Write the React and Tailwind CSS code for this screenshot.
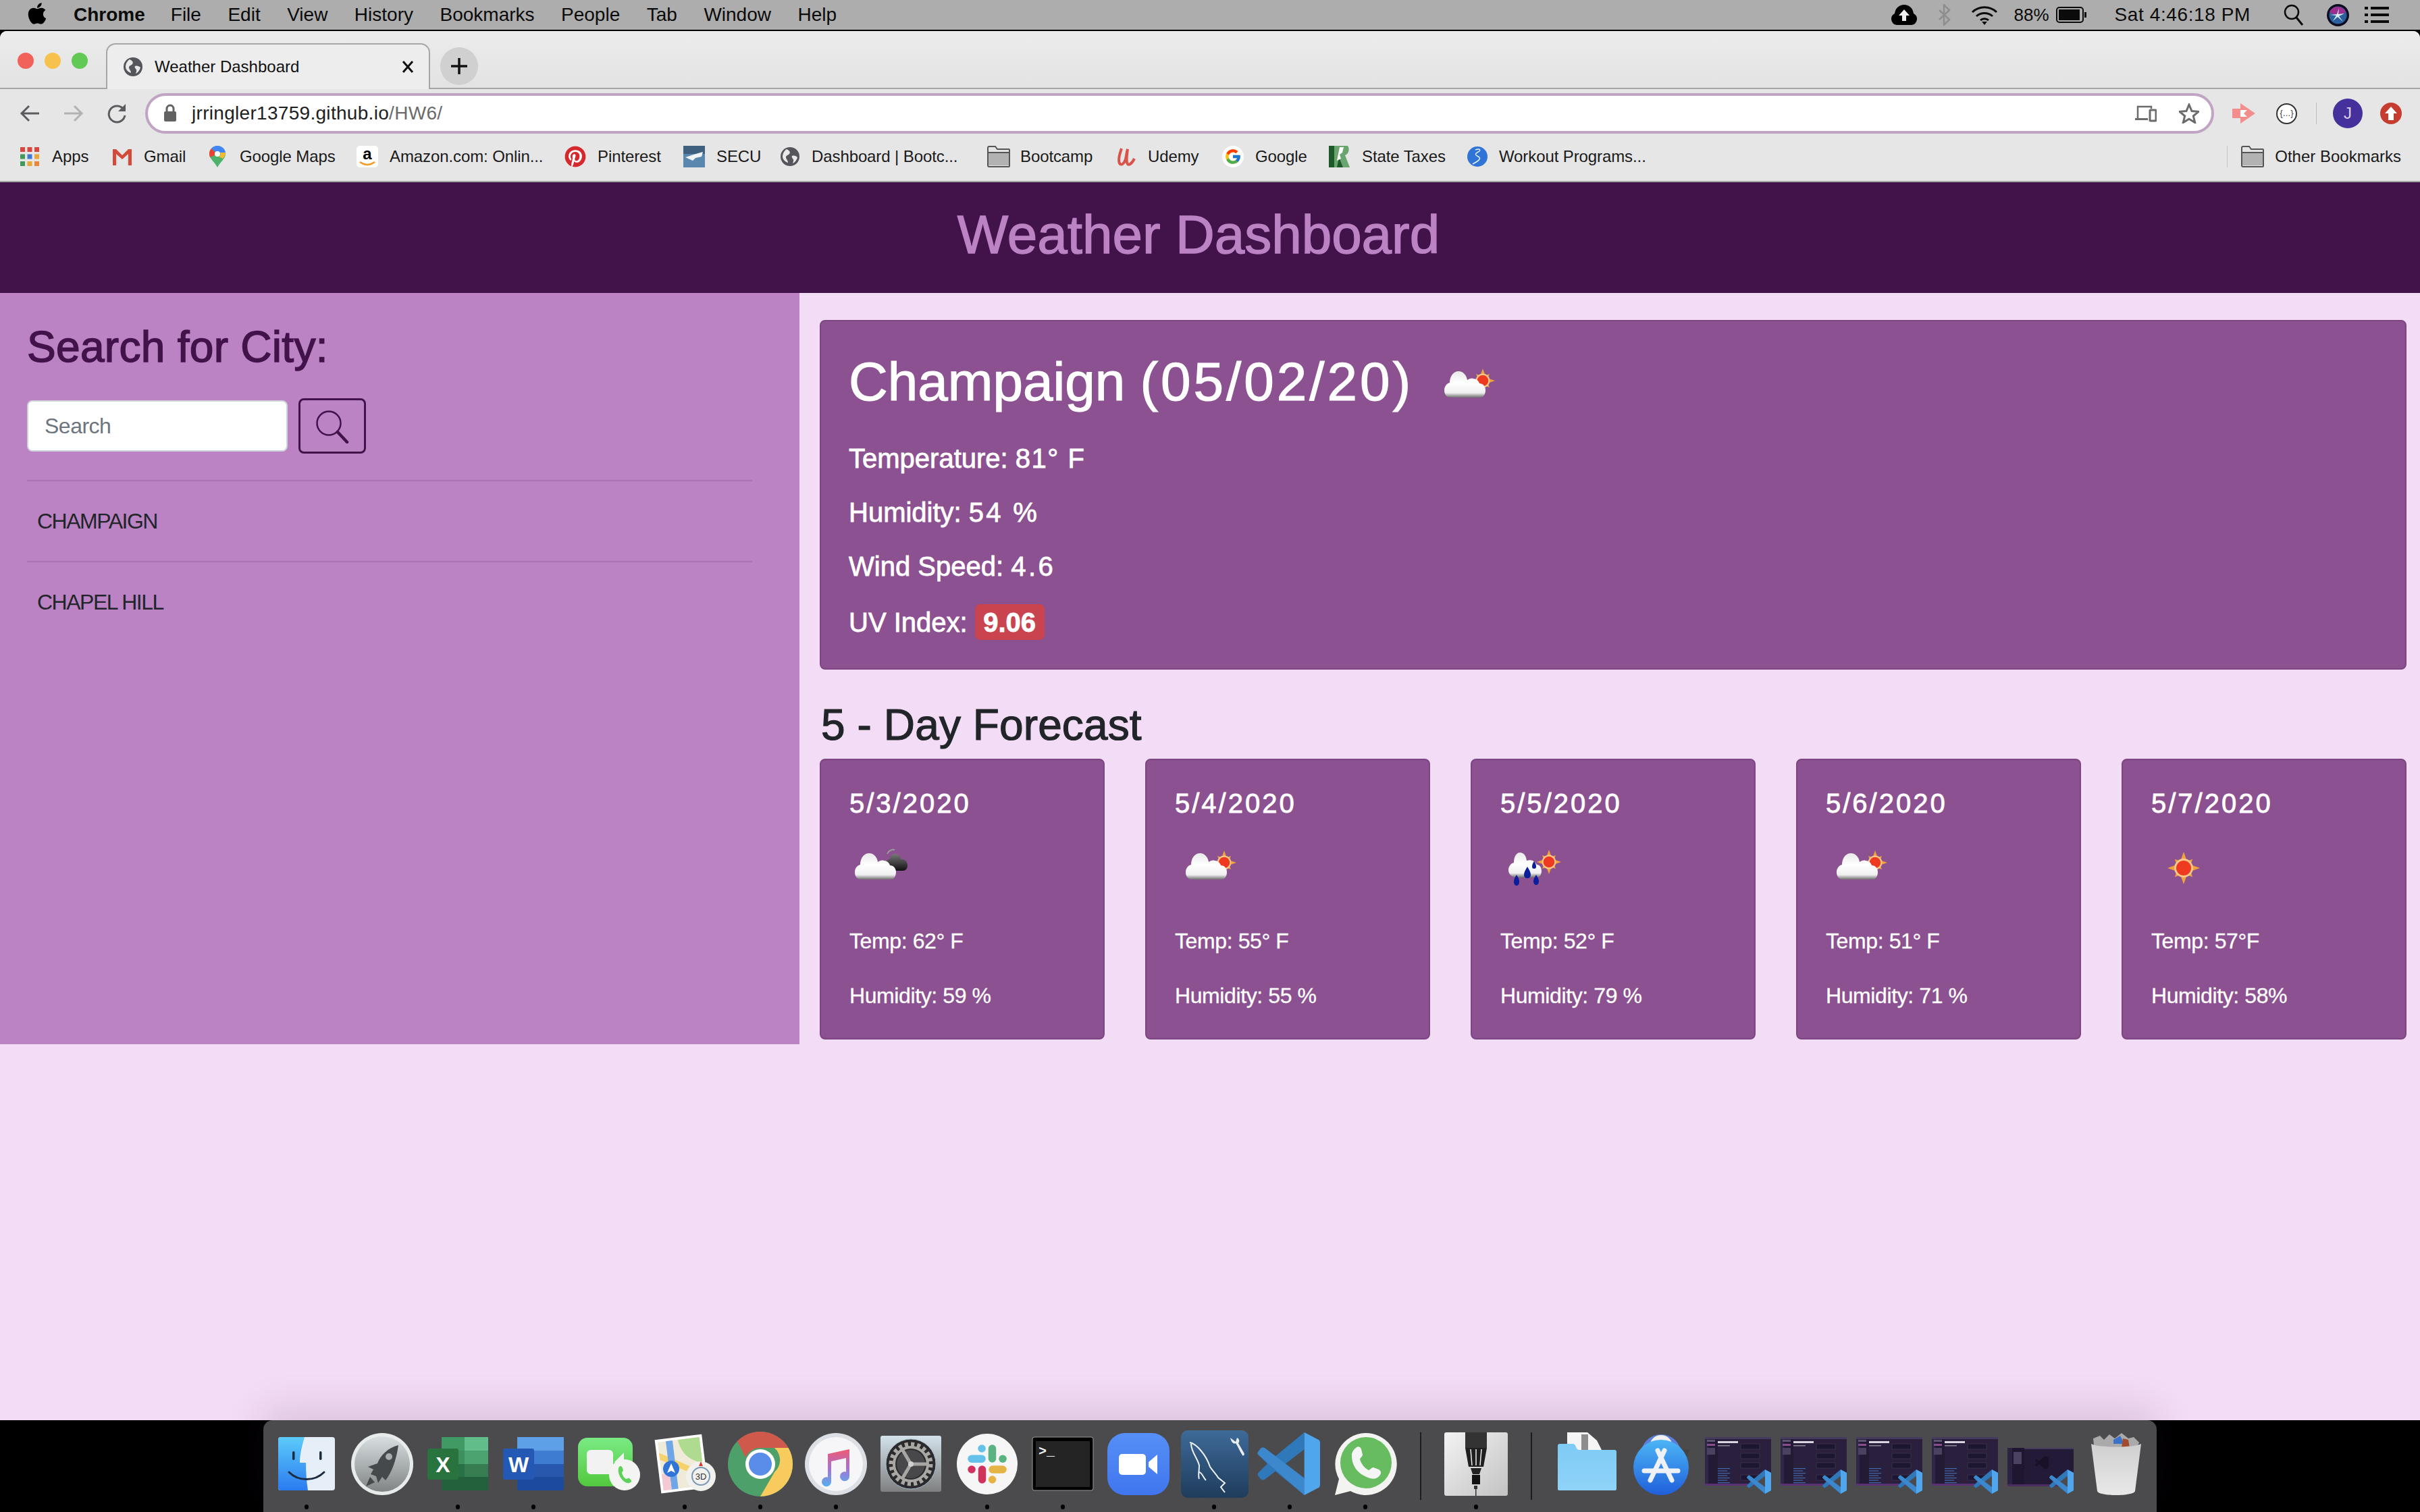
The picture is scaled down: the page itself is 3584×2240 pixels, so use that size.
import React from "react";
import { FaApple, FaPinterest } from "react-icons/fa";
import { FcGoogle } from "react-icons/fc";

const MENU = ["File", "Edit", "View", "History", "Bookmarks", "People", "Tab", "Window", "Help"];

function Globe({ size = 28 }) {
  return (
    <svg width={size} height={size} viewBox="0 0 28 28" className="shrink-0">
      <circle cx="14" cy="14" r="14" fill="#55565c" />
      <path d="M9 3c4 2 6 4 4 7-2 2-5 2-5 5 0 3 3 4 3 8-4-1-8-5-8-9 0-5 3-9 6-11z" fill="#e9e9e9" />
      <path d="M17 13c3-1 6 0 8 2-1 4-4 8-7 9 1-3 2-5 0-7-1-1-2-3-1-4z" fill="#e9e9e9" />
    </svg>
  );
}

function FolderIcon() {
  return (
    <svg width="34" height="32" viewBox="0 0 34 32" className="shrink-0">
      <path d="M1 3a2 2 0 0 1 2-2h9l3 4h17a1 1 0 0 1 1 1v24a1 1 0 0 1-1 1H3a2 2 0 0 1-2-2z" fill="#e4e4e4" stroke="#555" strokeWidth="2" />
      <rect x="2" y="10" width="30" height="19" fill="#b2b2b2" />
      <rect x="2" y="9" width="30" height="2" fill="#555" />
    </svg>
  );
}

function Bm({ icon, label, w, gap }) {
  return (
    <div className={`flex items-center shrink-0 ${gap || "gap-[17px]"}`} style={{ width: w }}>
      {icon}
      <span className="text-[24px] text-[#1a1a1a] whitespace-nowrap tracking-[-0.1px]">{label}</span>
    </div>
  );
}

function Cloud() {
  return (
    <path d="M18 73c-7 0-10-5-10-11 0-6 4-10 8-11 0-10 6-17 13-17 7 0 12 6 13 13 3-2 6-3 9-2 4 0 8 3 9 7 5 0 9 4 9 10 0 6-3 11-8 11z" fill="url(#wxCloud)" />
  );
}

function Sun({ cx, cy, r }) {
  const rays = [];
  for (let i = 0; i < 8; i++) {
    const a = (i * Math.PI) / 4;
    const big = i % 2 === 0 ? 1 : 0.78;
    const R = r * big;
    const t = r * 0.35;
    const x = cx + Math.sin(a) * R;
    const y = cy - Math.cos(a) * R;
    const x1 = cx + Math.cos(a) * t;
    const y1 = cy + Math.sin(a) * t;
    const x2 = cx - Math.cos(a) * t;
    const y2 = cy - Math.sin(a) * t;
    rays.push(<polygon key={i} points={`${x},${y} ${x1},${y1} ${x2},${y2}`} fill="#f2a33a" />);
  }
  return (
    <g>
      {rays}
      <circle cx={cx} cy={cy} r={r * 0.58} fill="#f7c98a" />
      <circle cx={cx} cy={cy} r={r * 0.46} fill="#ee3a20" />
    </g>
  );
}

function Wx({ type, size = 100 }) {
  return (
    <svg width={size} height={size} viewBox="0 0 100 100" className="shrink-0">
      <defs>
        <linearGradient id="wxCloud" x1="0" y1="0" x2="0" y2="1">
          <stop offset="0" stopColor="#e9e9e9" />
          <stop offset="0.45" stopColor="#ffffff" />
          <stop offset="0.82" stopColor="#f0f0f0" />
          <stop offset="1" stopColor="#6f6f6f" />
        </linearGradient>
        <linearGradient id="wxDark" x1="0" y1="0" x2="0" y2="1">
          <stop offset="0" stopColor="#777" />
          <stop offset="1" stopColor="#111" />
        </linearGradient>
      </defs>
      {type === "sun" && <Sun cx={48} cy={56} r={24} />}
      {type === "cs" && (
        <g>
          <Sun cx={73} cy={48} r={18} />
          <g transform="translate(8 0)">
            <Cloud />
          </g>
        </g>
      )}
      {type === "dark" && (
        <g>
          <path d="M56 35c2-5 7-7 11-6" fill="none" stroke="#9a9a9a" strokeWidth="2" />
          <path d="M62 60c-6 0-9-4-8-9 0-5 3-8 6-9 1-5 5-8 9-7 4 1 7 4 7 8 5-1 10 3 10 9 0 5-3 8-7 8z" fill="url(#wxDark)" />
          <Cloud />
        </g>
      )}
      {type === "rain" && (
        <g>
          <Sun cx={72} cy={47} r={18} />
          <path d="M24 70c-7 0-12-5-12-11 0-6 4-10 8-11 0-9 4-15 9-15 6 0 9 5 10 12 3-1 6-1 9 0 3 2 5 4 6 6 4 0 7 4 7 9 0 6-3 10-7 10z" fill="url(#wxCloud)" />
          <path d="M40 54c3 5 5 8 5 12 0 3-2 5-5 5s-5-2-5-5c0-4 2-7 5-12z" fill="#0a1d9a" />
          <path d="M24 66c3 5 4 7 4 11 0 3-2 5-4 5s-4-2-4-5c0-4 1-6 4-11z" fill="#0a1d9a" />
          <path d="M53 66c3 5 4 7 4 10 0 3-2 5-4 5s-4-2-4-5c0-3 1-5 4-10z" fill="#0a1d9a" />
          <path d="M50 46c2 3 3 5 3 8 0 2-1 3-3 3s-3-1-3-3c0-3 1-5 3-8z" fill="#0a1d9a" />
        </g>
      )}
    </svg>
  );
}

function ForecastCard({ date, type, temp, hum }) {
  return (
    <div className="w-[422px] h-[416px] shrink-0 rounded-[8px] border-2 border-[#7d4682] bg-[#8c5190] px-[42px] pt-[40px] text-white">
      <h5 className="text-[40px] leading-[48px] mb-[16px] tracking-[3px] [-webkit-text-stroke:0.8px_#ffffff]">{date}</h5>
      <Wx type={type} />
      <p className="mt-[40px] text-[32px] leading-[48px] mb-[33px] tracking-[-0.4px] [-webkit-text-stroke:0.3px_#ffffff]">{temp}</p>
      <p className="text-[32px] leading-[48px] tracking-[-0.4px] [-webkit-text-stroke:0.3px_#ffffff]">{hum}</p>
    </div>
  );
}

const VSLeft = "M75 0 29 38 12 25c-2-1-4-1-6 0l-4 5c-2 2-2 4 0 6l14 14L2 64c-2 2-2 4 0 6l4 5c2 1 4 1 6 0l17-13 46 38z";

function VSCode({ x = 0, y = 0, s = 1 }) {
  return (
    <g transform={`translate(${x} ${y}) scale(${s})`}>
      <path d={VSLeft} fill="#2f78b9" />
      <path d="M75 27 45 50l30 23z" fill="#4a4b4e" />
      <path d="M12 25c-2-1-4-1-6 0l-4 5c-2 2-2 4 0 6l73 64V73z" fill="#3d88cd" />
      <path d="M75 0l21 11c3 1 4 3 4 6v66c0 3-1 5-4 6l-21 11z" fill="#50a6ec" />
    </g>
  );
}

function Thumb({ blank }) {
  const lines = [];
  if (!blank) {
    for (let i = 0; i < 7; i++) {
      lines.push(<rect key={`a${i}`} x="26" y={62 + i * 3.5} width={i % 2 ? 14 : 18} height="1.2" fill="#3f69a8" />);
      lines.push(<rect key={`b${i}`} x="26" y={90 + i * 3} width={i % 2 ? 10 : 15} height="1.2" fill="#3f69a8" />);
    }
    [26, 40, 54, 72, 86].forEach((y) => lines.push(<rect key={y} x="60" y={y} width="28" height="8" fill="#1d1630" stroke="#4e4661" strokeWidth=".5" />));
    lines.push(<rect key="t" x="26" y="22" width="30" height="3" fill="#d9d5e2" />);
    lines.push(<rect key="t2" x="26" y="28" width="18" height="1.5" fill="#8b8599" />);
    lines.push(<rect key="c" x="10" y="20" width="12" height="3" fill="#5f5577" />);
    lines.push(<rect key="c2" x="10" y="26" width="12" height="3" fill="#834f8c" />);
    lines.push(<rect key="c3" x="10" y="32" width="12" height="10" fill="#4a4260" />);
  }
  return (
    <svg width="112" height="112" viewBox="0 0 112 112" className="-my-[8px]">
      {blank ? (
        <g>
          <rect x="7" y="32" width="98" height="56" fill="#231a37" />
          <rect x="7" y="32" width="98" height="2" fill="#453c5d" />
          <rect x="7" y="32" width="7" height="56" fill="#2c2242" />
          <rect x="14" y="32" width="18" height="56" fill="#1f1731" />
          <rect x="16" y="38" width="12" height="18" fill="#4a4260" />
          <g transform="translate(48 44) scale(.2)" opacity=".55"><path d={VSLeft} fill="#100b1c" /><path d="M75 0l21 11c3 1 4 3 4 6v66c0 3-1 5-4 6l-21 11z" fill="#100b1c" /></g>
          <rect x="7" y="86" width="98" height="3" fill="#4e2d63" />
          <VSCode x={69} y={64} s={0.36} />
        </g>
      ) : (
        <g>
          <clipPath id="thumbClip"><rect x="7" y="16" width="98" height="72" /></clipPath>
          <rect x="7" y="16" width="98" height="72" fill="#2a1f3d" />
          <rect x="7" y="16" width="98" height="3" fill="#453c5d" />
          <rect x="7" y="19" width="5" height="69" fill="#31264a" />
          <rect x="12" y="19" width="14" height="69" fill="#231a35" />
          <g clipPath="url(#thumbClip)">{lines}</g>
          <rect x="7" y="85" width="98" height="3" fill="#5a3175" />
          <VSCode x={69} y={64} s={0.36} />
        </g>
      )}
    </svg>
  );
}

function I({ children }) {
  return (
    <svg width="96" height="96" viewBox="0 0 96 96" className="overflow-visible">
      {children}
    </svg>
  );
}

const dockIcons = {
  finder: (
    <I>
      <rect x="6" y="8" width="84" height="79" rx="4" fill="#e6eff8" />
      <path d="M10 8h35c-4 14-7 26-7 38h9c0 14 1 28 3 41H10a4 4 0 0 1-4-4V12a4 4 0 0 1 4-4z" fill="url(#fb)" />
      <defs>
        <linearGradient id="fb" x1="0" y1="0" x2="0" y2="1"><stop offset="0" stopColor="#5ccbfa" /><stop offset="1" stopColor="#2b7bf0" /></linearGradient>
      </defs>
      <rect x="27" y="29" width="3.5" height="13" rx="1.7" fill="#1c2b3d" />
      <rect x="67" y="29" width="3.5" height="13" rx="1.7" fill="#1c2b3d" />
      <path d="M22 60c14 14 38 14 52 0" fill="none" stroke="#1c2b3d" strokeWidth="3" strokeLinecap="round" />
    </I>
  ),
  rocket: (
    <I>
      <defs>
        <linearGradient id="rk" x1="0" y1="0" x2="0" y2="1"><stop offset="0" stopColor="#d8dfe0" /><stop offset="1" stopColor="#808485" /></linearGradient>
      </defs>
      <circle cx="48" cy="48" r="46" fill="#e7eceb" />
      <circle cx="48" cy="48" r="41" fill="url(#rk)" />
      <path d="M72 20c-15 4-26 14-31 27l-14 5 8 4-4 7 8 3 3 10 6-9 5 5c9-11 16-30 19-52z" fill="#46494b" />
      <path d="M30 67l-6 14 13-6z" fill="#46494b" />
      <circle cx="58" cy="37" r="5" fill="#a9adad" />
    </I>
  ),
  excel: (
    <I>
      <rect x="24" y="8" width="69" height="79" rx="3" fill="#2d7b4d" />
      <rect x="24" y="8" width="34" height="20" fill="#3f9a63" />
      <rect x="58" y="8" width="35" height="20" fill="#61bd8a" />
      <rect x="24" y="28" width="34" height="20" fill="#3d8f5d" />
      <rect x="58" y="28" width="35" height="20" fill="#4da36f" />
      <rect x="24" y="48" width="34" height="19" fill="#2a7046" />
      <rect x="58" y="48" width="35" height="19" fill="#367d51" />
      <rect x="24" y="67" width="69" height="20" fill="#23613c" />
      <rect x="3" y="25" width="46" height="46" rx="3" fill="#29733f" />
      <text x="26" y="60" textAnchor="middle" fontSize="32" fontWeight="700" fill="#fff">X</text>
    </I>
  ),
  word: (
    <I>
      <rect x="24" y="8" width="69" height="79" rx="3" fill="#1c4a9c" />
      <rect x="24" y="8" width="69" height="20" fill="#5ea0e8" />
      <rect x="24" y="28" width="69" height="20" fill="#3d7cd0" />
      <rect x="24" y="48" width="69" height="19" fill="#2858ae" />
      <rect x="3" y="25" width="46" height="46" rx="3" fill="#2358b5" />
      <text x="26" y="60" textAnchor="middle" fontSize="32" fontWeight="700" fill="#fff">W</text>
    </I>
  ),
  facetime: (
    <I>
      <defs>
        <linearGradient id="ft" x1="0" y1="0" x2="0" y2="1"><stop offset="0" stopColor="#7aea84" /><stop offset="1" stopColor="#52c93e" /></linearGradient>
      </defs>
      <rect x="2" y="9" width="81" height="72" rx="14" fill="url(#ft)" />
      <rect x="15" y="27" width="39" height="36" rx="6" fill="#f2f2f2" />
      <path d="M56 45l14-14v30z" fill="#f2f2f2" />
      <circle cx="71" cy="64" r="23" fill="#f4f5f2" />
      <path d="M63 52c2-2 4-1 5 2l1 3c0 2-2 2-2 4 1 4 3 7 6 9 2 0 3-2 5-1l2 2c2 2 1 4-2 5-4 1-9-2-13-8-4-7-4-13-2-16z" fill="#5ed15a" />
    </I>
  ),
  maps: (
    <I>
      <g transform="rotate(-7 40 46)">
        <rect x="8" y="8" width="70" height="80" fill="#fff" />
        <rect x="12" y="12" width="62" height="72" fill="#f0ead8" />
        <path d="M42 12h32v38c-16-4-30-16-32-38z" fill="#aedb8f" />
        <path d="M12 38l62 36v-10l-62-36z" fill="#f6d26c" />
        <rect x="24" y="12" width="10" height="72" fill="#6ea6e8" />
        <path d="M12 60h12v24H12z" fill="#f5c9d4" />
      </g>
      <circle cx="28" cy="55" r="12" fill="#2f74d6" />
      <path d="M28 47l6 14-6-3-6 3z" fill="#fff" />
      <circle cx="72" cy="66" r="22" fill="#f1f1ee" />
      <circle cx="72" cy="66" r="13" fill="none" stroke="#7b97b4" strokeWidth="2" />
      <text x="72" y="71" textAnchor="middle" fontSize="13" fill="#333">3D</text>
      <path d="M72 44l3 7h-6z" fill="#d6372c" />
    </I>
  ),
  chrome: (
    <I>
      <circle cx="48" cy="48" r="48" fill="#4da06a" />
      <path d="M48 0a48 48 0 0 1 41.6 24H48a24 24 0 0 0-22 14L14 14A48 48 0 0 1 48 0z" fill="#cf5a4b" />
      <path d="M89.6 24A48 48 0 0 1 48 96l21-36a24 24 0 0 0 0-36z" fill="#f8cb5e" />
      <circle cx="48" cy="48" r="22" fill="#fff" />
      <circle cx="48" cy="48" r="17" fill="#5a8cea" />
    </I>
  ),
  itunes: (
    <I>
      <defs>
        <linearGradient id="it" x1="0" y1="0" x2="0" y2="1"><stop offset="0" stopColor="#f0596e" /><stop offset="0.5" stopColor="#a971d0" /><stop offset="1" stopColor="#54b0ef" /></linearGradient>
      </defs>
      <circle cx="48" cy="48" r="46" fill="#dcdfe4" />
      <circle cx="48" cy="48" r="40" fill="#f6f6f8" />
      <path d="M36 33l32-7v40a7 7 0 1 1-5-6.500V39l-22 5v30a7 7 0 1 1-5-6.500z" fill="url(#it)" />
    </I>
  ),
  prefs: (
    <I>
      <defs>
        <linearGradient id="pr" x1="0" y1="0" x2="0" y2="1"><stop offset="0" stopColor="#d3e2ea" /><stop offset="1" stopColor="#7f8080" /></linearGradient>
      </defs>
      <rect x="2" y="6" width="90" height="83" rx="3" fill="url(#pr)" />
      <circle cx="47" cy="48" r="37" fill="#2b2b2d" stroke="#a6bccb" strokeWidth="1" />
      <circle cx="47" cy="48" r="29" fill="none" stroke="#a9a7a4" strokeWidth="7" strokeDasharray="5 4.100" />
      <circle cx="47" cy="48" r="25" fill="none" stroke="#a9a7a4" strokeWidth="4" />
      <circle cx="47" cy="48" r="21" fill="#48484a" />
      <g stroke="#a9a7a4" strokeWidth="5"><path d="M47 48 34 26" /><path d="M47 48h24" /><path d="M47 48 34 70" /></g>
      <circle cx="47" cy="48" r="4" fill="#d0d0d0" />
    </I>
  ),
  slack: (
    <I>
      <circle cx="48" cy="48" r="45" fill="#f6f6f6" />
      <g strokeLinecap="round" strokeWidth="11.500" fill="none">
        <path d="M40 25h.1" stroke="#63c1ea" />
        <path d="M25 40.300h15" stroke="#63c1ea" />
        <path d="M55.500 25v15" stroke="#5bb381" />
        <path d="M71 40.300h.1" stroke="#5bb381" />
        <path d="M56 56h15" stroke="#e6b345" />
        <path d="M55.500 71h.1" stroke="#e6b345" />
        <path d="M40.500 56v15" stroke="#d0325e" />
        <path d="M25 56h.1" stroke="#d0325e" />
      </g>
    </I>
  ),
  terminal: (
    <I>
      <rect x="3" y="8" width="90" height="79" rx="3" fill="#000" stroke="#9a9a9a" strokeWidth="1" />
      <rect x="8" y="14" width="80" height="68" fill="#242424" />
      <text x="12" y="35" fontSize="20" fontWeight="700" fill="#f2f2f2" fontFamily="'Liberation Mono', monospace">&gt;_</text>
    </I>
  ),
  zoom: (
    <I>
      <defs>
        <linearGradient id="zm" x1="0" y1="0" x2="0" y2="1"><stop offset="0" stopColor="#568ff6" /><stop offset="1" stopColor="#3f76ef" /></linearGradient>
      </defs>
      <rect x="2" y="2" width="92" height="92" rx="26" fill="url(#zm)" />
      <rect x="19" y="33" width="40" height="31" rx="5" fill="#fff" />
      <path d="M63 45l13-11v29L63 52z" fill="#fff" />
    </I>
  ),
  mysql: (
    <I>
      <defs>
        <linearGradient id="my" x1="0" y1="0" x2="0" y2="1"><stop offset="0" stopColor="#3e6a98" /><stop offset="1" stopColor="#1f3c5c" /></linearGradient>
      </defs>
      <rect x="-1" y="-2" width="100" height="100" rx="10" fill="url(#my)" />
      <path d="M12 16c10 2 24 18 30 36 4 6 10 12 12 16l10 8-6 6 6 8M14 18c0 12 10 22 12 32 0 10-2 16 0 20M26 60c4 0 6 8 10 12" fill="none" stroke="#eef3f7" strokeWidth="2" />
      <path d="M72 9c2 8 6 10 8 8 4 6 6 12 10 18 2 2 4-2 2-4l-8-14c2-2 2-6-2-8l-2 6z" fill="#e8edf2" />
    </I>
  ),
  vscode: (
    <I>
      <VSCode x={0} y={1} s={0.93} />
    </I>
  ),
  whatsapp: (
    <I>
      <path d="M48 2a46 46 0 1 1-22 86L3 94l6-24A46 46 0 0 1 48 2z" fill="#f3f3f1" />
      <circle cx="49" cy="46" r="38" fill="#66bc5f" />
      <path d="M34 24c3-3 7-2 8 2l2 8c0 3-3 4-4 7 2 7 7 13 13 16 3-1 4-4 7-4l8 3c3 2 4 5 2 8-3 5-9 7-15 5-17-5-28-18-27-36 1-4 3-7 6-9z" fill="#f5f5f5" />
    </I>
  ),
  pencil: (
    <I>
      <defs>
        <linearGradient id="pc" x1="0" y1="0" x2="1" y2="1"><stop offset="0" stopColor="#f3f3f3" /><stop offset="1" stopColor="#c2c2c2" /></linearGradient>
      </defs>
      <rect x="1" y="1" width="94" height="94" rx="3" fill="url(#pc)" />
      <rect x="32" y="1" width="32" height="23" fill="#333" />
      <path d="M32 24h32l-5 28H37z" fill="#1f1f1f" />
      <g stroke="#eee" strokeWidth="1.5"><path d="M40 26l2 24M48 26v24M56 26l-2 24" /></g>
      <path d="M40 54h16l-3 9h-10z" fill="#222" />
      <rect x="42" y="64" width="12" height="14" fill="#111" />
      <rect x="45" y="80" width="5" height="5" fill="#333" />
      <rect x="47" y="85" width="1.500" height="10" fill="#333" />
    </I>
  ),
  folder: (
    <I>
      <path d="M19 1h30l14 12 11 22H19z" fill="#f5f5f5" />
      <rect x="40" y="4" width="10" height="30" fill="#8d8d8d" />
      <defs>
        <linearGradient id="fd" x1="0" y1="0" x2="0" y2="1"><stop offset="0" stopColor="#7ecbf4" /><stop offset="1" stopColor="#8fd3f8" /></linearGradient>
      </defs>
      <path d="M5 21a3 3 0 0 1 3-3h20c4 0 4 9 8 9h53a3 3 0 0 1 3 3v55a2 2 0 0 1-2 2H7a2 2 0 0 1-2-2z" fill="url(#fd)" />
    </I>
  ),
  appstore: (
    <I>
      <defs>
        <linearGradient id="as" x1="0" y1="0" x2="0" y2="1"><stop offset="0" stopColor="#4cb5f6" /><stop offset="1" stopColor="#1f5fdb" /></linearGradient>
      </defs>
      <circle cx="46" cy="34" r="30" fill="#5a7edc" />
      <circle cx="46" cy="22" r="17" fill="#f0f0f0" />
      <rect x="78" y="26" width="8" height="12" fill="#444" transform="rotate(20 82 32)" />
      <circle cx="46" cy="53" r="41" fill="url(#as)" />
      <g stroke="#eef1f6" strokeWidth="7" strokeLinecap="round"><path d="M51 28 30 72" /><path d="M41 28l21 44" /><path d="M21 58h50" /></g>
    </I>
  ),
  trash: (
    <I>
      <defs>
        <linearGradient id="tr" x1="0" y1="0" x2="0" y2="1"><stop offset="0" stopColor="#cfcfcf" /><stop offset="1" stopColor="#e9e9e9" /></linearGradient>
      </defs>
      <path d="M14 10l10-4 6 6 8-8 8 6 10-8 10 8 8-2 8 8-6 14H16z" fill="#aaaaaa" />
      <path d="M44 12l10-6 6 12H44z" fill="#3a72c8" />
      <path d="M58 10l8 2 2 12H56z" fill="#a44a2e" />
      <path d="M11 18c10 6 64 6 74 0l-9 70c-2 8-54 8-56 0z" fill="url(#tr)" />
    </I>
  ),
};

function DockItem({ icon, dot, children }) {
  return (
    <div className="w-[112px] shrink-0 flex flex-col items-center pt-[17px]">
      <div className="h-[96px] flex items-center justify-center">{children || dockIcons[icon]}</div>
      {dot ? <div className="mt-[12px] w-[6px] h-[7px] rounded-full bg-black" /> : null}
    </div>
  );
}

function DockSep() {
  return <div className="w-[2px] h-[100px] mt-[18px] mx-[25px] bg-[#1d1d1d] shrink-0" />;
}

export default function App() {
  return (
    <div className="w-[3584px] h-[2240px] flex flex-col overflow-hidden bg-black [font-family:'Liberation_Sans',Arial,sans-serif]">
      {/* macOS menu bar */}
      <div className="h-[46px] shrink-0 border-b-2 border-black bg-[#adadad] flex items-center text-[28px] text-[#0b0b0b]">
        <FaApple className="ml-[38px] w-[34px] h-[36px] text-black shrink-0 -mt-[4px]" />
        <span className="ml-[37px] font-bold">Chrome</span>
        <div className="ml-[38px] flex gap-[39.5px]">
          {MENU.map((m) => (
            <span key={m}>{m}</span>
          ))}
        </div>
        <div className="ml-auto flex items-center">
          <svg width="40" height="30" viewBox="0 0 40 30">
            <path d="M9 30a9 9 0 0 1-3-17C7 5 13 0 20 0c7 0 13 5 14 13a9 9 0 0 1-3 17z" fill="#000" />
            <path d="M20 7l8 9h-5v8h-6v-8h-5z" fill="#eee" />
          </svg>
          <svg width="19" height="32" viewBox="0 0 19 32" className="ml-[30px]">
            <path d="M2 9l15 14-8 8V1l8 8L2 23" fill="none" stroke="#8e8e8e" strokeWidth="2.5" />
          </svg>
          <svg width="40" height="30" viewBox="0 0 40 30" className="ml-[30px]">
            <g fill="none" stroke="#0b0b0b" strokeWidth="3">
              <path d="M2 11a26 26 0 0 1 36 0" />
              <path d="M8 17a18 18 0 0 1 24 0" />
              <path d="M14 23a9 9 0 0 1 12 0" />
            </g>
            <path d="M20 30l-4-5h8z" fill="#0b0b0b" />
          </svg>
          <span className="ml-[24px] text-[26px]">88%</span>
          <svg width="45" height="24" viewBox="0 0 45 24" className="ml-[10px]">
            <rect x="1" y="1" width="39" height="22" rx="4" fill="none" stroke="#0b0b0b" strokeWidth="2" />
            <rect x="4" y="4" width="31" height="16" fill="#0b0b0b" />
            <rect x="42" y="8" width="3" height="8" fill="#0b0b0b" />
          </svg>
          <span className="ml-[42px] tracking-[0.6px]">Sat 4:46:18 PM</span>
          <svg width="30" height="32" viewBox="0 0 30 32" className="ml-[49px]">
            <circle cx="12" cy="12" r="10" fill="none" stroke="#0b0b0b" strokeWidth="2.5" />
            <path d="M19 20l9 11" stroke="#0b0b0b" strokeWidth="3" />
          </svg>
          <svg width="33" height="33" viewBox="0 0 33 33" className="ml-[34px]">
            <circle cx="16.500" cy="16.500" r="16.500" fill="#0e0e20" />
            <circle cx="16.500" cy="16.500" r="13" fill="#2c5f9e" />
            <path d="M4 12a13 13 0 0 1 24 0l-12 6z" fill="#9c2f8f" />
            <path d="M18 6l-1 9 9-1-8 4 6 8-8-7-7 6 5-8-9-1 10-1z" fill="#d8eef2" />
          </svg>
          <svg width="36" height="24" viewBox="0 0 36 24" className="ml-[23px] mr-[46px]">
            <g fill="#0b0b0b">
              <rect x="0" y="0" width="5" height="4" /><rect x="9" y="0" width="27" height="4" />
              <rect x="0" y="10" width="5" height="4" /><rect x="9" y="10" width="27" height="4" />
              <rect x="0" y="20" width="5" height="4" /><rect x="9" y="20" width="27" height="4" />
            </g>
          </svg>
        </div>
      </div>

      {/* Chrome window */}
      <div className="flex-1 min-h-0 flex flex-col rounded-t-[10px] overflow-hidden bg-[#f3dcf5]">
        {/* tab strip */}
        <div className="h-[86px] shrink-0 border-b-2 border-[#a6a6a6] bg-gradient-to-b from-[#ececec] to-[#e3e3e3] flex items-end relative">
          <div className="flex gap-[16px] ml-[26px] mb-[28px]">
            <div className="w-[24px] h-[24px] rounded-full bg-[#f0625a]" />
            <div className="w-[24px] h-[24px] rounded-full bg-[#f7c14d]" />
            <div className="w-[24px] h-[24px] rounded-full bg-[#63c955]" />
          </div>
          <div className="ml-[27px] w-[480px] h-[68px] -mb-[2px] rounded-t-[14px] border-2 border-b-0 border-[#a6a6a6] bg-[#ededed] flex items-center pl-[24px] relative z-10">
            <Globe />
            <span className="ml-[18px] text-[24px] text-[#111] whitespace-nowrap">Weather Dashboard</span>
            <svg width="18" height="18" viewBox="0 0 18 18" className="ml-[152px] shrink-0">
              <path d="M2 1l14 16M16 1L2 17" stroke="#111" strokeWidth="3" />
            </svg>
          </div>
          <div className="ml-[15px] mb-[4px] w-[56px] h-[56px] rounded-full bg-[#d0d0d0] flex items-center justify-center">
            <svg width="26" height="26" viewBox="0 0 26 26"><path d="M13 1v24M1 13h24" stroke="#111" strokeWidth="3.500" /></svg>
          </div>
        </div>

        {/* toolbar */}
        <div className="h-[70px] shrink-0 bg-[#e6e6e6] flex items-center pt-[2px]">
          <svg width="30" height="26" viewBox="0 0 30 26" className="ml-[29px]"><path d="M29 13H3M14 2 3 13l11 11" fill="none" stroke="#5b5c60" strokeWidth="3" /></svg>
          <svg width="30" height="26" viewBox="0 0 30 26" className="ml-[35px]"><path d="M1 13h26M16 2l11 11-11 11" fill="none" stroke="#b2b2b2" strokeWidth="3" /></svg>
          <svg width="30" height="30" viewBox="0 0 30 30" className="ml-[34px]"><path d="M25 9a12 12 0 1 0 2 9" fill="none" stroke="#5b5c60" strokeWidth="3" /><path d="M28 1v11H17z" fill="#5b5c60" /></svg>
          <div className="ml-[27px] w-[3064px] h-[60px] rounded-full border-[4px] border-[#c1a4c4] bg-white flex items-center shrink-0">
            <svg width="20" height="28" viewBox="0 0 20 28" className="ml-[23px]">
              <path d="M5 12V7a5 5 0 0 1 10 0v5" fill="none" stroke="#626262" strokeWidth="3" />
              <rect x="1" y="11" width="18" height="15" rx="2" fill="#626262" />
            </svg>
            <span className="ml-[22px] text-[28px] tracking-[0.3px] text-[#202020] whitespace-nowrap">
              jrringler13759.github.io<span className="text-[#6b6b6b]">/HW6/</span>
            </span>
            <svg width="32" height="26" viewBox="0 0 32 26" className="ml-auto">
              <path d="M4 20V3h20v3" fill="none" stroke="#6b6b6b" strokeWidth="2.500" />
              <rect x="0" y="20" width="19" height="3" fill="#6b6b6b" />
              <rect x="22" y="8" width="9" height="16" rx="1" fill="none" stroke="#6b6b6b" strokeWidth="3" />
            </svg>
            <svg width="30" height="30" viewBox="0 0 30 30" className="ml-[33px] mr-[18px]">
              <path d="M15 2l4 9.500 10 .8-7.700 6.500 2.400 9.800L15 23.300 6.300 28.600l2.400-9.800L1 12.300l10-.8z" fill="none" stroke="#6b6b6b" strokeWidth="3" />
            </svg>
          </div>
          <svg width="34" height="30" viewBox="0 0 34 30" className="ml-[27px]">
            <path d="M0 8h12V0l22 15-22 15v-8H0z" fill="#f38e8c" />
            <path d="M12 10h10l-5 5 5 5H12z" fill="#fff" />
          </svg>
          <div className="ml-[31px] w-[31px] h-[31px] rounded-full border-2 border-[#333] bg-white flex items-center justify-center text-[12px] text-[#333]">{"{…}"}</div>
          <div className="ml-[28px] w-[1px] h-[32px] bg-[#bbb]" />
          <div className="ml-[24px] w-[44px] h-[44px] rounded-full bg-[#46309b] flex items-center justify-center text-[24px] text-[#d9d3ee]">J</div>
          <div className="ml-[26px] w-[32px] h-[32px] rounded-full bg-[#c63d30] flex items-center justify-center">
            <svg width="18" height="20" viewBox="0 0 18 20"><path d="M9 0l9 10h-5v10H5V10H0z" fill="#fff" /></svg>
          </div>
        </div>

        {/* bookmarks */}
        <div className="h-[68px] shrink-0 bg-[#e6e6e6] border-b-2 border-[#a6a6a6] flex items-center pl-[30px] pb-[6px]">
          <Bm w={136} gap="gap-[19px]" label="Apps" icon={
            <svg width="28" height="28" viewBox="0 0 28 28" className="shrink-0">
              {[["#d8473d", "#d8473d", "#d8473d"], ["#3f9a57", "#3f79d6", "#e8a83a"], ["#3f9a57", "#e8a83a", "#e8893a"]].map((r, i) =>
                r.map((c, j) => <rect key={`${i}${j}`} x={j * 10.500} y={i * 10.500} width="7" height="7" fill={c} />)
              )}
            </svg>
          } />
          <Bm w={145} label="Gmail" icon={
            <svg width="30" height="30" viewBox="0 0 30 30" className="shrink-0">
              <path d="M1 4h4l10 9 10-9h4v24h-7V13l-7 6-7-6v15H1z" fill="#d9dada" />
              <path d="M1 4l5 0 9 9 9-9h5l0 24h-5V11l-9 8-9-8v17H1z" fill="#d44a3a" />
            </svg>
          } />
          <Bm w={217} gap="gap-[21px]" label="Google Maps" icon={
            <svg width="24" height="32" viewBox="0 0 24 32" className="shrink-0 -ml-[1px]">
              <path d="M12 0a12 12 0 0 1 12 12c0 7-8 12-12 20C8 24 0 19 0 12A12 12 0 0 1 12 0z" fill="#4db36a" />
              <path d="M3 4a12 12 0 0 1 9-4v8a4 4 0 0 0-3 1z" fill="#4285f4" />
              <path d="M12 0a12 12 0 0 1 12 10l-8 0a4 4 0 0 0-4-2z" fill="#4285f4" />
              <path d="M3 4l6 6a4 4 0 0 0-1 4l-7 3C-1 12 0 7 3 4z" fill="#ea4335" />
              <path d="M24 10c0 4-2 6-4 9l-6-3a4 4 0 0 0 2-6z" fill="#f5bb30" />
              <circle cx="12" cy="12" r="4" fill="#fff" />
            </svg>
          } />
          <Bm w={308} label="Amazon.com: Onlin..." icon={
            <div className="w-[32px] h-[32px] rounded-[5px] bg-white shrink-0 flex flex-col items-center leading-none relative">
              <span className="text-[24px] font-bold text-black leading-[24px]">a</span>
              <svg width="24" height="8" viewBox="0 0 24 8" className="absolute bottom-[1px]"><path d="M1 1c7 5 15 5 22 0" fill="none" stroke="#f39b26" strokeWidth="2.500" /></svg>
            </div>
          } />
          <Bm w={176} label="Pinterest" icon={
            <div className="w-[32px] h-[32px] rounded-full bg-white shrink-0 flex items-center justify-center"><FaPinterest className="w-[32px] h-[32px] text-[#d42a2e]" /></div>
          } />
          <Bm w={144} label="SECU" icon={
            <svg width="32" height="32" viewBox="0 0 32 32" className="shrink-0">
              <rect width="32" height="32" fill="#5a87ad" />
              <rect width="32" height="12" fill="#3f607f" />
              <path d="M3 17l12-4 14-4-2 7-9 2-4 4z" fill="#f2f4f6" />
            </svg>
          } />
          <div className="w-[306px] flex items-center gap-[18px] shrink-0">
            <Globe />
            <span className="text-[24px] text-[#1a1a1a] whitespace-nowrap tracking-[-0.1px]">Dashboard | Bootc...</span>
          </div>
          <Bm w={193} gap="gap-[15px]" label="Bootcamp" icon={<FolderIcon />} />
          <Bm w={155} label="Udemy" icon={
            <svg width="28" height="32" viewBox="0 0 28 32" className="shrink-0">
              <path d="M6 4C4 10 0 20 3 26c3 4 7 0 9-6 1-5 2-12 3-15-1 8-3 18 0 22 2 2 6 0 10-8" fill="none" stroke="#d9534a" strokeWidth="4" />
            </svg>
          } />
          <Bm w={158} label="Google" icon={
            <div className="w-[32px] h-[32px] rounded-full bg-white shrink-0 flex items-center justify-center"><FcGoogle className="w-[26px] h-[26px]" /></div>
          } />
          <Bm w={205} label="State Taxes" icon={
            <svg width="32" height="32" viewBox="0 0 32 32" className="shrink-0">
              <rect width="22" height="32" fill="#1c5a2a" />
              <path d="M8 0h20c3 4 2 12-4 14l7 18H21l-6-15-3 15H8z" fill="#6aa56f" />
              <path d="M16 2h6l-2 8-4 3 2 6-6 3 2-10z" fill="#fff" />
            </svg>
          } />
          <Bm w={0} label="Workout Programs..." icon={
            <svg width="30" height="32" viewBox="0 0 30 32" className="shrink-0">
              <circle cx="15" cy="16" r="15" fill="#2f74d6" />
              <path d="M12 6c5-2 8-1 6 2-3 2-7 3-5 6 3 2 7 3 5 6-2 3-6 5-10 7" fill="none" stroke="#e7f0fb" strokeWidth="1.500" />
            </svg>
          } />
          <div className="ml-auto w-[1px] h-[32px] bg-[#c4c4c4]" />
          <div className="ml-[20px] mr-[28px] flex items-center gap-[16px]">
            <FolderIcon />
            <span className="text-[24px] text-[#1a1a1a] whitespace-nowrap">Other Bookmarks</span>
          </div>
        </div>

        {/* page */}
        <div className="flex-1 min-h-0 bg-[#f3dcf5]">
          <header className="h-[164px] bg-[#42134a] flex items-center justify-center pr-[34px] pb-[8px]">
            <h1 className="text-[80px] leading-[96px] text-[#bb83c4] [-webkit-text-stroke:1.4px_#bb83c4]">Weather Dashboard</h1>
          </header>

          <div className="flex h-[1113px] items-start">
            {/* sidebar */}
            <aside className="w-[1184px] h-full shrink-0 bg-[#bb83c4] pl-[40px] pr-[70px] pt-[42px]">
              <h2 className="text-[64px] leading-[77px] tracking-[0.3px] text-[#42134a] [-webkit-text-stroke:1.5px_#42134a]">Search for City:</h2>
              <div className="mt-[37px] h-[82px] flex items-center gap-[16px]">
                <input
                  placeholder="Search"
                  className="w-[386px] h-[76px] rounded-[8px] border-2 border-[#ced4da] bg-white px-[24px] text-[32px] tracking-[-0.5px] text-[#495057] placeholder:text-[#6c757d] outline-none"
                />
                <div className="w-[100px] h-[82px] rounded-[8px] border-[3px] border-[#42134a] flex items-center justify-center">
                  <svg width="50" height="50" viewBox="0 0 50 50" className="mt-[1px]">
                    <circle cx="20" cy="20" r="17.500" fill="none" stroke="#42134a" strokeWidth="2.500" />
                    <path d="M33 33l14 15" stroke="#42134a" strokeWidth="4.500" strokeLinecap="round" />
                  </svg>
                </div>
              </div>
              <ul className="mt-[39px]">
                {["CHAMPAIGN", "CHAPEL HILL"].map((c) => (
                  <li key={c} className="h-[120px] border-t-2 border-[rgba(0,0,0,0.1)] pl-[15px] flex items-center text-[32px] text-[#212529] tracking-[-1.5px]">
                    {c}
                  </li>
                ))}
              </ul>
            </aside>

            {/* main */}
            <main className="flex-1 min-w-0 pl-[30px] pr-[20px] pt-[40px]">
              <section className="h-[518px] rounded-[8px] border-2 border-[#7d4682] bg-[#8c5190] px-[41px] pt-[42px] text-white">
                <div className="flex items-start h-[96px]">
                  <h2 className="text-[80px] leading-[96px] [-webkit-text-stroke:1.2px_#ffffff] whitespace-nowrap">
                    Champaign <span className="tracking-[4px]">(05/02/20)</span>
                  </h2>
                  <div className="ml-[40px] mt-[12px] w-[86px] h-[86px] overflow-hidden shrink-0">
                    <div className="-ml-[10px] -mt-[14px]">
                      <Wx type="cs" size={100} />
                    </div>
                  </div>
                </div>
                <div className="mt-[41px] text-[40px] leading-[48px] [-webkit-text-stroke:0.8px_#ffffff]">
                  <p className="mb-[32px]">Temperature: <span className="tracking-[1.5px]">81° F</span></p>
                  <p className="mb-[32px]">Humidity: <span className="tracking-[3.3px]">54 %</span></p>
                  <p className="mb-[32px]">Wind Speed: <span className="tracking-[3.5px]">4.6</span></p>
                  <p className="flex items-center">
                    UV Index:
                    <span className="ml-[11px] h-[53px] w-[103px] rounded-[8px] bg-[#c9444e] flex items-center justify-center font-bold">9.06</span>
                  </p>
                </div>
              </section>

              <h3 className="mt-[44px] mb-[11px] ml-[2px] text-[64px] leading-[77px] tracking-[0.1px] text-[#212529] [-webkit-text-stroke:1.2px_#212529]">5 - Day Forecast</h3>

              <div className="flex justify-between">
                <ForecastCard date="5/3/2020" type="dark" temp="Temp: 62° F" hum="Humidity: 59 %" />
                <ForecastCard date="5/4/2020" type="cs" temp="Temp: 55° F" hum="Humidity: 55 %" />
                <ForecastCard date="5/5/2020" type="rain" temp="Temp: 52° F" hum="Humidity: 79 %" />
                <ForecastCard date="5/6/2020" type="cs" temp="Temp: 51° F" hum="Humidity: 71 %" />
                <ForecastCard date="5/7/2020" type="sun" temp="Temp: 57°F" hum="Humidity: 58%" />
              </div>
            </main>
          </div>
        </div>
      </div>

      {/* dock */}
      <div className="h-[136px] shrink-0 flex justify-center bg-black">
        <div className="w-[2804px] h-full rounded-t-[14px] bg-[#4b4b4d] flex pl-[8px] shadow-[0_-14px_60px_rgba(60,20,70,0.14)] relative">
          <DockItem icon="finder" dot />
          <DockItem icon="rocket" />
          <DockItem icon="excel" dot />
          <DockItem icon="word" dot />
          <DockItem icon="facetime" />
          <DockItem icon="maps" dot />
          <DockItem icon="chrome" dot />
          <DockItem icon="itunes" dot />
          <DockItem icon="prefs" />
          <DockItem icon="slack" dot />
          <DockItem icon="terminal" dot />
          <DockItem icon="zoom" />
          <DockItem icon="mysql" dot />
          <DockItem icon="vscode" dot />
          <DockItem icon="whatsapp" dot />
          <DockSep />
          <DockItem icon="pencil" dot />
          <DockSep />
          <DockItem icon="folder" />
          <DockItem icon="appstore" />
          <DockItem><Thumb /></DockItem>
          <DockItem><Thumb /></DockItem>
          <DockItem><Thumb /></DockItem>
          <DockItem><Thumb /></DockItem>
          <DockItem><Thumb blank /></DockItem>
          <DockItem icon="trash" />
        </div>
      </div>
    </div>
  );
}
